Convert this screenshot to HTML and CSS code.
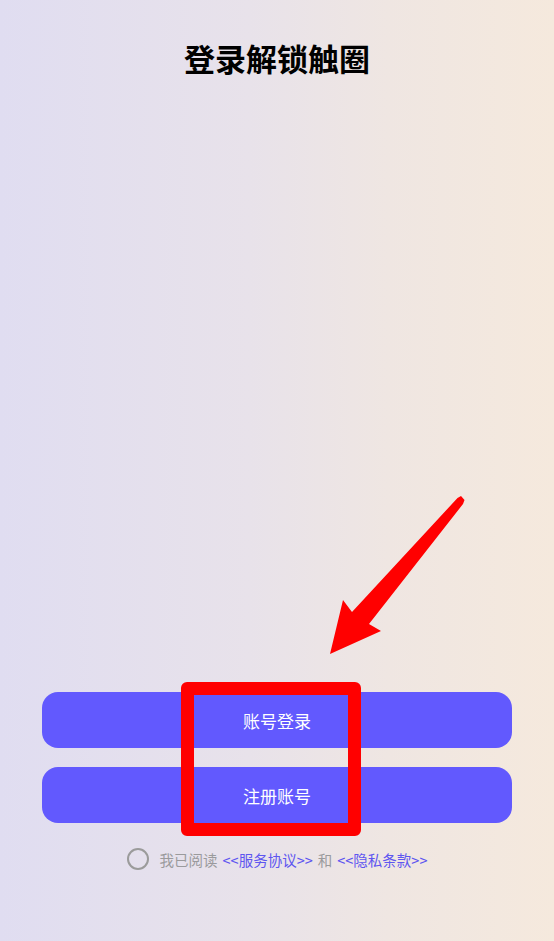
FILE: index.html
```html
<!DOCTYPE html>
<html lang="zh">
<head>
<meta charset="utf-8">
<link rel="stylesheet" href="styles.css">
</head>
<body>
<div class="page">
  <h1 class="title">登录解锁触圈</h1>
  <div class="spacer"></div>
  <div class="actions">
    <button class="btn">账号登录</button>
    <button class="btn">注册账号</button>
    <div class="agree">
      <span class="radio"></span>
      <span class="muted">我已阅读</span>
      <a class="link">&lt;&lt;服务协议&gt;&gt;</a>
      <span class="muted">和</span>
      <a class="link">&lt;&lt;隐私条款&gt;&gt;</a>
    </div>
  </div>
  <div class="highlight"></div>
  <svg class="arrow" width="554" height="941" viewBox="0 0 554 941">
    <polygon fill="#ff0000" points="457.5,498 461,496 464.5,500 463,504 369,624 381,631 330,654 343,600 352,612"/>
  </svg>
</div>
</body>
</html>
```

FILE: styles.css
```css
html, body {
  margin: 0;
  padding: 0;
}
body {
  font-family: "Noto Sans CJK SC", "Noto Sans", sans-serif;
}
.page {
  position: relative;
  width: 554px;
  height: 941px;
  display: flex;
  flex-direction: column;
  background: linear-gradient(90deg, #e0ddf1 0%, #e8e2ea 45%, #efe6e2 70%, #f5e9dd 100%);
  overflow: hidden;
}
.title {
  margin: 0;
  padding-top: 37px;
  font-size: 31px;
  line-height: 42px;
  font-weight: 700;
  text-align: center;
  color: #000;
}
.spacer {
  flex: 1;
}
.actions {
  display: flex;
  flex-direction: column;
  align-items: center;
  gap: 19px;
  padding: 0 42px 71px;
}
.btn {
  width: 100%;
  height: 56px;
  border: none;
  border-radius: 16px;
  background: #6259fe;
  color: #fff;
  font-family: inherit;
  font-size: 17px;
  padding: 0;
}
.agree {
  margin-top: 6px;
  height: 22px;
  display: flex;
  align-items: center;
  gap: 5px;
  font-size: 14.5px;
  color: #9a9a9c;
}
.radio {
  width: 18px;
  height: 18px;
  border: 2px solid #9b9b9b;
  border-radius: 50%;
  margin-right: 6px;
  box-sizing: content-box;
}
.link {
  color: #5e56f0;
}
.highlight {
  position: absolute;
  left: 181px;
  top: 682px;
  width: 180px;
  height: 154px;
  box-sizing: border-box;
  border: 13px solid #ff0000;
  border-radius: 6px;
}
.arrow {
  position: absolute;
  left: 0;
  top: 0;
}
```
